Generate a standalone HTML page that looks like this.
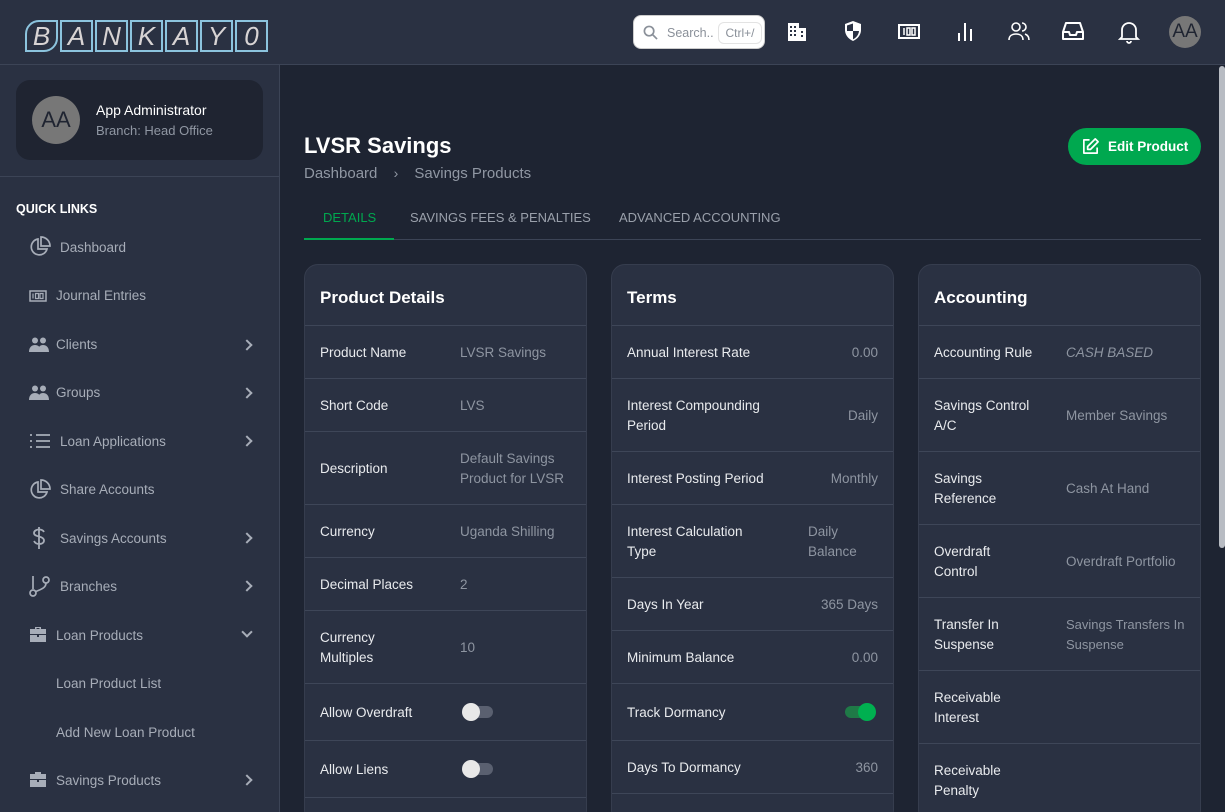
<!DOCTYPE html>
<html><head><meta charset="utf-8"><style>
*{box-sizing:border-box;margin:0;padding:0}
html,body{width:1225px;height:812px;overflow:hidden}
body{background:#1e2432;font-family:"Liberation Sans",sans-serif;color:#e6e8ec;position:relative;font-size:13.5px}
.top{position:absolute;left:0;top:0;width:1225px;height:65px;background:#2a3142;border-bottom:1px solid #3c4456}
.logo{position:absolute;left:25px;top:20px;display:flex;gap:2px}
.logo span{width:33px;height:32px;border:2px solid #8cc4de;color:#d8d4d4;font-style:italic;font-size:26px;display:flex;align-items:center;justify-content:center;line-height:1}
.logo span:first-child{border-radius:14px 0 14px 0}
.search{position:absolute;left:633px;top:15px;width:132px;height:34px;background:#fff;border-radius:8px;border:1px solid #ccc}
.search .t{position:absolute;left:33px;top:10px;font-size:12.5px;color:#8a9099}
.search .k{position:absolute;left:84px;top:6px;width:44px;height:22px;border:1px solid #e3e3e3;border-radius:6px;font-size:12px;color:#8a9099;text-align:center;line-height:20px;background:#fff}
.ic{position:absolute;top:20px}
.av{position:absolute;width:32px;height:32px;border-radius:50%;background:#777;color:#1f2431;font-size:19px;display:flex;align-items:center;justify-content:center}
.side{position:absolute;left:0;top:65px;width:280px;height:747px;background:#2a3142;border-right:1px solid #3c4456}
.prof{position:absolute;left:16px;top:15px;width:247px;height:80px;background:#1f2431;border-radius:14px}
.prof .av{left:16px;top:16px;width:48px;height:48px;font-size:22px}
.prof .n{position:absolute;left:80px;top:22px;font-size:14px;color:#fff}
.prof .b{position:absolute;left:80px;top:43px;font-size:13px;color:#9097a3}
.sep{position:absolute;left:0;top:111px;width:279px;border-top:1px solid #3c4456}
.ql{position:absolute;left:16px;top:137px;font-size:12.5px;font-weight:bold;color:#fff}
.mi{position:absolute;left:56px;font-size:13.5px;color:#a7adb8}
.mic{position:absolute;left:29px}
.chev{position:absolute;left:243px;width:8px;height:8px;border-right:2px solid #a7adb8;border-top:2px solid #a7adb8;transform:rotate(45deg)}
.h1{position:absolute;left:304px;top:133px;font-size:22px;font-weight:bold;color:#fff}
.bc{position:absolute;left:304px;top:165px;font-size:15px;color:#9097a3}
.btn{position:absolute;left:1068px;top:128px;width:133px;height:37px;background:#00a84f;border-radius:19px;color:#fff;font-size:13.5px;font-weight:bold}
.tabs{position:absolute;left:304px;top:239px;width:897px;border-top:1px solid #3c4456}
.tab{position:absolute;top:210px;font-size:13px;color:#9aa0ab}
.card{position:absolute;top:264px;width:283px;height:560px;background:#2a3142;border-radius:14px;border:1px solid #363d4e;overflow:hidden}
.card h3{position:absolute;left:15px;top:23px;font-size:17px;color:#fff}
.row{position:absolute;left:0;width:100%;border-top:1px solid #3e4658}
.l{position:absolute;left:15px;font-size:13.5px;color:#e9ebee;line-height:20px}
.v{position:absolute;font-size:13.5px;color:#8e95a1;line-height:20px}
.tg{position:absolute;width:30px;height:12px;border-radius:6px;background:#5a6070}
.tg i{position:absolute;top:-3px;width:18px;height:18px;border-radius:50%;background:#e8e8e8}
.scroll{position:absolute;left:1219px;top:66px;width:6px;height:482px;background:#b8bcc3;border-radius:3px}
</style></head><body>
<div class="top">
<div class="logo"><span>B</span><span>A</span><span>N</span><span>K</span><span>A</span><span>Y</span><span>0</span></div>
<div class="search"><svg style="position:absolute;left:9px;top:9px" width="15" height="15" viewBox="0 0 16 16" fill="none" stroke="#8a9099" stroke-width="1.8"><circle cx="6.5" cy="6.5" r="5"/><path d="M10.5 10.5L15 15"/></svg><span class="t">Search..</span><span class="k">Ctrl+/</span></div>
<svg class="ic" style="left:787px" width="20" height="22" viewBox="0 0 20 22" fill="#fff"><path d="M1 3h11v18H1z M12 8h7v13h-7z"/><g fill="#2a3142"><rect x="3" y="6" width="2" height="2"/><rect x="7" y="6" width="2" height="2"/><rect x="3" y="10" width="2" height="2"/><rect x="7" y="10" width="2" height="2"/><rect x="3" y="14" width="2" height="2"/><rect x="7" y="14" width="2" height="2"/><rect x="14" y="11" width="2" height="2"/><rect x="14" y="15" width="2" height="2"/></g></svg>
<svg class="ic" style="left:843px" width="20" height="22" viewBox="0 0 20 22"><path d="M10 1L2 4v6c0 5 3.5 9 8 11 4.5-2 8-6 8-11V4z" fill="#fff"/><path d="M10 3.5v7.5H4V5.5zM10 11h6c-.4 4-3 7-6 8.3z" fill="#2a3142"/></svg>
<svg class="ic" style="left:898px;top:24px" width="22" height="15" viewBox="0 0 22 15" fill="none" stroke="#fff" stroke-width="2"><rect x="1" y="1" width="20" height="13"/><path d="M6 4v7M9 4h3v7H9zM14 4h3v7h-3z" stroke-width="1.5"/></svg>
<svg class="ic" style="left:956px" width="18" height="22" viewBox="0 0 18 22" stroke="#fff" stroke-width="2"><path d="M3 13v8M9 3v18M15 9v12"/></svg>
<svg class="ic" style="left:1008px" width="22" height="22" viewBox="0 0 22 22" fill="none" stroke="#fff" stroke-width="1.6"><circle cx="8" cy="7" r="4"/><path d="M1 20c0-4 3-6 7-6s7 2 7 6M14 3a4 4 0 010 8M17 14c2.5 1 4 3 4 6"/></svg>
<svg class="ic" style="left:1061px" width="24" height="22" viewBox="0 0 24 22" fill="none" stroke="#fff" stroke-width="2" stroke-linejoin="round"><path d="M5 3h14l3 9v7H2v-7z M2 12h6l1 3h6l1-3h6"/></svg>
<svg class="ic" style="left:1118px;top:19px" width="22" height="26" viewBox="0 0 22 26" fill="none" stroke="#fff" stroke-width="1.8"><path d="M4 18V11a7 7 0 0114 0v7l2 2H2z M9 22a2 2 0 004 0"/></svg>
<div class="av" style="left:1169px;top:16px">AA</div>
</div>
<div class="side">
<div class="prof"><div class="av">AA</div><div class="n">App Administrator</div><div class="b">Branch: Head Office</div></div>
<div class="sep"></div>
<div class="ql">QUICK LINKS</div>
<svg class="mic" style="top:171px" width="22" height="22" viewBox="0 0 22 22" fill="none" stroke="#a7adb8" stroke-width="1.7"><path d="M9 3a8 8 0 109 10H9z M12 1v9h9a9 9 0 00-9-9z"/></svg><div class="mi" style="top:175px;left:60px">Dashboard</div>
<svg class="mic" style="top:225px" width="18" height="12" viewBox="0 0 18 12" fill="none" stroke="#a7adb8" stroke-width="1.5"><rect x="1" y="1" width="16" height="10"/><path d="M4 3.5v5M6.5 3.5h3v5h-3zM11 3.5h3v5h-3z" stroke-width="1.2"/></svg><div class="mi" style="top:223px">Journal Entries</div>
<svg class="mic" style="top:272px" width="20" height="15" viewBox="0 0 20 15" fill="#a7adb8"><circle cx="6" cy="3.5" r="3"/><circle cx="14" cy="3.5" r="3"/><path d="M0 15c0-5 3-7 6-7s6 2 6 7zM9 15c0-5 2-7 5-7s6 2 6 7z"/></svg><div class="mi" style="top:272px">Clients</div><div class="chev" style="top:276px"></div>
<svg class="mic" style="top:320px" width="20" height="15" viewBox="0 0 20 15" fill="#a7adb8"><circle cx="6" cy="3.5" r="3"/><circle cx="14" cy="3.5" r="3"/><path d="M0 15c0-5 3-7 6-7s6 2 6 7zM9 15c0-5 2-7 5-7s6 2 6 7z"/></svg><div class="mi" style="top:320px">Groups</div><div class="chev" style="top:324px"></div>
<svg class="mic" style="top:368px" width="22" height="16" viewBox="0 0 22 16" stroke="#a7adb8" stroke-width="1.8"><path d="M1 2h2M1 8h2M1 14h2M7 2h14M7 8h14M7 14h14"/></svg><div class="mi" style="top:369px;left:60px">Loan Applications</div><div class="chev" style="top:372px"></div>
<svg class="mic" style="top:414px" width="22" height="22" viewBox="0 0 22 22" fill="none" stroke="#a7adb8" stroke-width="1.7"><path d="M9 3a8 8 0 109 10H9z M12 1v9h9a9 9 0 00-9-9z"/></svg><div class="mi" style="top:417px;left:60px">Share Accounts</div>
<svg class="mic" style="top:461px;left:32px" width="14" height="24" viewBox="0 0 14 24" fill="none" stroke="#a7adb8" stroke-width="1.8"><path d="M7 1v22M12 6c-1-2-3-2.5-5-2.5S2 4.5 2 7s3 3 5 3.5 5 1.5 5 4-2.5 3.5-5 3.5-4-1-5-3"/></svg><div class="mi" style="top:466px;left:60px">Savings Accounts</div><div class="chev" style="top:469px"></div>
<svg class="mic" style="top:510px" width="22" height="22" viewBox="0 0 22 22" fill="none" stroke="#a7adb8" stroke-width="1.7"><path d="M4 1v13M17 8c0 6-8 7-11 9"/><circle cx="4" cy="18" r="3"/><circle cx="17" cy="5" r="3"/></svg><div class="mi" style="top:514px;left:60px">Branches</div><div class="chev" style="top:517px"></div>
<svg class="mic" style="top:561px" width="18" height="16" viewBox="0 0 18 16" fill="#a7adb8"><path d="M6 3V1h6v2h5v5H1V3z M1 9h7v2h2V9h7v7H1z"/><rect x="7.5" y="2" width="3" height="1" fill="#2a3142"/></svg><div class="mi" style="top:563px">Loan Products</div><div class="chev" style="top:563px;transform:rotate(135deg)"></div>
<div class="mi" style="top:611px">Loan Product List</div>
<div class="mi" style="top:660px">Add New Loan Product</div>
<svg class="mic" style="top:706px" width="18" height="16" viewBox="0 0 18 16" fill="#a7adb8"><path d="M6 3V1h6v2h5v5H1V3z M1 9h7v2h2V9h7v7H1z"/></svg><div class="mi" style="top:708px">Savings Products</div><div class="chev" style="top:711px"></div>
</div>
<div class="h1">LVSR Savings</div>
<div class="bc">Dashboard <span style="display:inline-block;margin:0 12px 0 12px;font-size:14px">›</span> Savings Products</div>
<div class="btn"><svg style="position:absolute;left:13px;top:9px" width="19" height="19" viewBox="0 0 20 20" fill="none" stroke="#fff" stroke-width="1.8" stroke-linejoin="round"><path d="M9 3H3v14h14v-6M15 2l3 3-8 8H7v-3z"/></svg><span style="position:absolute;left:40px;top:11px">Edit Product</span></div>
<div class="tab" style="left:323px;color:#00a84f">DETAILS</div>
<div class="tab" style="left:410px">SAVINGS FEES &amp; PENALTIES</div>
<div class="tab" style="left:619px">ADVANCED ACCOUNTING</div>
<div class="tabs"></div>
<div style="position:absolute;left:304px;top:238px;width:90px;height:2px;background:#00a84f"></div>

<div class="card" style="left:304px"><h3>Product Details</h3>
<div class="row" style="top:60px"></div><div class="l" style="top:78px">Product Name</div><div class="v" style="left:155px;top:78px">LVSR Savings</div>
<div class="row" style="top:113px"></div><div class="l" style="top:131px">Short Code</div><div class="v" style="left:155px;top:131px">LVS</div>
<div class="row" style="top:166px"></div><div class="l" style="top:194px">Description</div><div class="v" style="left:155px;top:184px">Default Savings<br>Product for LVSR</div>
<div class="row" style="top:239px"></div><div class="l" style="top:257px">Currency</div><div class="v" style="left:155px;top:257px">Uganda Shilling</div>
<div class="row" style="top:292px"></div><div class="l" style="top:310px">Decimal Places</div><div class="v" style="left:155px;top:310px">2</div>
<div class="row" style="top:345px"></div><div class="l" style="top:363px">Currency<br>Multiples</div><div class="v" style="left:155px;top:373px">10</div>
<div class="row" style="top:418px"></div><div class="l" style="top:438px">Allow Overdraft</div><div class="tg" style="left:158px;top:441px"><i style="left:-1px"></i></div>
<div class="row" style="top:475px"></div><div class="l" style="top:495px">Allow Liens</div><div class="tg" style="left:158px;top:498px"><i style="left:-1px"></i></div>
<div class="row" style="top:532px"></div>
</div>

<div class="card" style="left:611px"><h3>Terms</h3>
<div class="row" style="top:60px"></div><div class="l" style="top:78px">Annual Interest Rate</div><div class="v" style="right:15px;top:78px">0.00</div>
<div class="row" style="top:113px"></div><div class="l" style="top:131px">Interest Compounding<br>Period</div><div class="v" style="right:15px;top:141px">Daily</div>
<div class="row" style="top:186px"></div><div class="l" style="top:204px">Interest Posting Period</div><div class="v" style="right:15px;top:204px">Monthly</div>
<div class="row" style="top:239px"></div><div class="l" style="top:257px">Interest Calculation<br>Type</div><div class="v" style="left:196px;top:257px">Daily<br>Balance</div>
<div class="row" style="top:312px"></div><div class="l" style="top:330px">Days In Year</div><div class="v" style="right:15px;top:330px">365 Days</div>
<div class="row" style="top:365px"></div><div class="l" style="top:383px">Minimum Balance</div><div class="v" style="right:15px;top:383px">0.00</div>
<div class="row" style="top:418px"></div><div class="l" style="top:438px">Track Dormancy</div><div class="tg" style="left:233px;top:441px;background:#1f7a47"><i style="left:13px;background:#00b050"></i></div>
<div class="row" style="top:475px"></div><div class="l" style="top:493px">Days To Dormancy</div><div class="v" style="right:15px;top:493px">360</div>
<div class="row" style="top:528px"></div>
</div>

<div class="card" style="left:918px"><h3>Accounting</h3>
<div class="row" style="top:60px"></div><div class="l" style="top:78px">Accounting Rule</div><div class="v" style="left:147px;top:78px;font-style:italic">CASH BASED</div>
<div class="row" style="top:113px"></div><div class="l" style="top:131px">Savings Control<br>A/C</div><div class="v" style="left:147px;top:141px">Member Savings</div>
<div class="row" style="top:186px"></div><div class="l" style="top:204px">Savings<br>Reference</div><div class="v" style="left:147px;top:214px">Cash At Hand</div>
<div class="row" style="top:259px"></div><div class="l" style="top:277px">Overdraft<br>Control</div><div class="v" style="left:147px;top:287px">Overdraft Portfolio</div>
<div class="row" style="top:332px"></div><div class="l" style="top:350px">Transfer In<br>Suspense</div><div class="v" style="left:147px;top:350px;font-size:13px">Savings Transfers In<br>Suspense</div>
<div class="row" style="top:405px"></div><div class="l" style="top:423px">Receivable<br>Interest</div>
<div class="row" style="top:478px"></div><div class="l" style="top:496px">Receivable<br>Penalty</div>
</div>
<div class="scroll"></div>
</body></html>
